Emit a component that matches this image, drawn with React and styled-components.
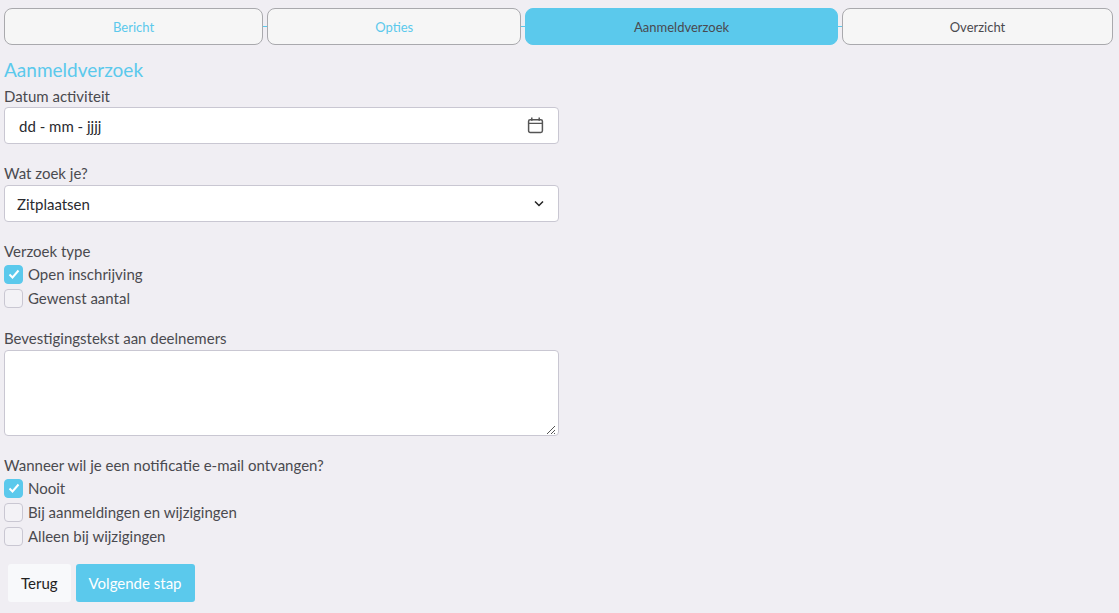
import React from "react";
import styled, { createGlobalStyle } from "styled-components";

const G = createGlobalStyle`
  body { margin:0; background:#f0eef3; font-family: Lato, "Noto Sans", sans-serif; color:#4a4a4f; }
`;
const Page = styled.div`padding:8px 6px 10px 4px; width:1109px;`;
const Tabs = styled.div`display:flex; align-items:center;`;
const Tab = styled.div`
  flex:${p=>p.w} 0 0; height:37px; box-sizing:border-box; border-radius:8px;
  display:flex; align-items:center; justify-content:center; font-size:13px;
  border:1px solid ${p=>p.active?"#5bc9ec":"#a9a9ad"};
  background:${p=>p.active?"#5bc9ec":"#f6f6f6"};
  color:${p=>p.done?"#5bc9ec":"#4a4a4f"};
`;
const Line = styled.div`width:4px; height:1px; background:#5bc9ec;`;
const Title = styled.h2`margin:13px 0 4px; height:23px; line-height:23px; font-size:19px; font-weight:400; color:#5bc9ec;`;
const Form = styled.div`width:555px;`;
const Label = styled.div`font-size:15px; height:22px; line-height:22px; margin-top:${p=>p.mt||0}px;`;
const Box = styled.div`
  height:${p=>p.h||37}px; box-sizing:border-box; background:#fff; border:1px solid #c9c7d2; border-radius:4px;
  display:flex; align-items:${p=>p.area?"flex-end":"center"}; justify-content:space-between; padding:0 ${p=>p.area?2:14}px 0 ${p=>p.pl||14}px; font-size:15px; color:#2a2a2f; margin-top:${p=>p.mt||0}px;
`;
const Check = styled.div`display:flex; align-items:center; height:24px; font-size:15px; gap:5px;`;
const Cb = styled.div`
  width:19px; height:19px; box-sizing:border-box; border-radius:4px;
  border:1px solid ${p=>p.on?"#5bc9ec":"#c9c7d2"}; background:${p=>p.on?"#5bc9ec":"#f3f2f6"};
  display:flex; align-items:center; justify-content:center;
`;
const Btns = styled.div`display:flex; gap:5px; margin:16px 0 0 4px;`;
const Btn = styled.div`
  height:38px; padding:0 13px; border-radius:3px; display:flex; align-items:center; font-size:15px;
  background:${p=>p.primary?"#5bc9ec":"#f8f9fb"}; color:${p=>p.primary?"#fff":"#222"};
`;
const Tick = () => <svg width="12" height="10" viewBox="0 0 12 10"><path d="M1.5 5.5l3 3 6-7" stroke="#fff" strokeWidth="2" fill="none"/></svg>;
const C = ({on,children}) => <Check><Cb on={on}>{on&&<Tick/>}</Cb>{children}</Check>;

export default function App(){
  return <><G/><Page>
    <Tabs>
      <Tab w={259} done>Bericht</Tab><Line/>
      <Tab w={254} done>Opties</Tab><Line/>
      <Tab w={313} active>Aanmeldverzoek</Tab><Line/>
      <Tab w={271}>Overzicht</Tab>
    </Tabs>
    <Title>Aanmeldverzoek</Title>
    <Form>
      <Label>Datum activiteit</Label>
      <Box><span>dd - mm - jjjj</span>
        <svg width="17" height="17" viewBox="0 0 16 16" fill="none" stroke="#555" strokeWidth="1.4"><rect x="1.5" y="2.5" width="13" height="12" rx="1.5"/><path d="M1.5 6h13M4.5 0.5v3M11.5 0.5v3"/></svg>
      </Box>
      <Label mt={18}>Wat zoek je?</Label>
      <Box pl={12} mt={1}><span>Zitplaatsen</span>
        <svg width="10" height="7" viewBox="0 0 10 7"><path d="M1 1.5l4 4 4-4" stroke="#222" strokeWidth="1.5" fill="none"/></svg>
      </Box>
      <Label mt={18}>Verzoek type</Label>
      <C on>Open inschrijving</C>
      <C>Gewenst aantal</C>
      <Label mt={17}>Bevestigingstekst aan deelnemers</Label>
      <Box h={86} mt={1} area><span/>
        <svg width="12" height="12" viewBox="0 0 12 12" stroke="#555"><path d="M11 3L3 11M11 7L7 11M11 10L10 11"/></svg>
      </Box>
      <Label mt={18}>Wanneer wil je een notificatie e-mail ontvangen?</Label>
      <C on>Nooit</C>
      <C>Bij aanmeldingen en wijzigingen</C>
      <C>Alleen bij wijzigingen</C>
    </Form>
    <Btns><Btn>Terug</Btn><Btn primary>Volgende stap</Btn></Btns>
  </Page></>;
}
